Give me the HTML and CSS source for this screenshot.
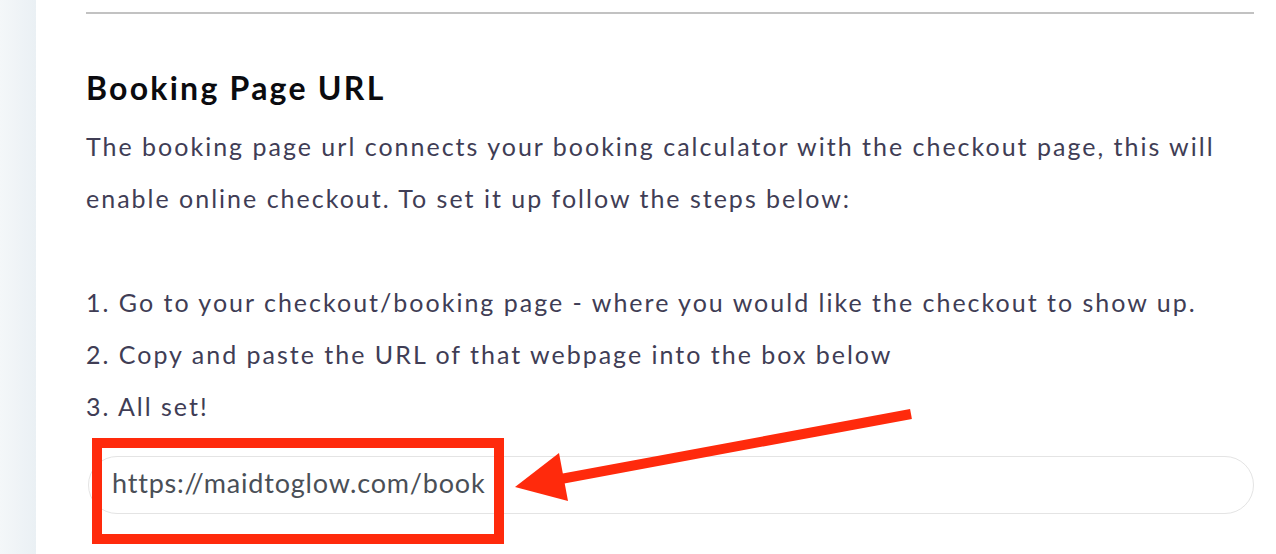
FILE: index.html
```html
<!DOCTYPE html>
<html lang="en">
<head>
<meta charset="utf-8">
<title>Booking Page URL</title>
<link rel="stylesheet" href="styles.css">
</head>
<body>
<div class="page">
  <aside class="sidebar"></aside>
  <main class="content">
    <hr class="divider">
    <section class="section">
      <h2 class="title">Booking Page URL</h2>
      <p class="desc">The booking page url connects your booking calculator with the checkout page, this will enable online checkout. To set it up follow the steps below:</p>
      <ol class="steps">
        <li>1. Go to your checkout/booking page - where you would like the checkout to show up.</li>
        <li>2. Copy and paste the URL of that webpage into the box below</li>
        <li>3. All set!</li>
      </ol>
      <div class="field">
        <input class="url-input" type="text" value="https://maidtoglow.com/book">
      </div>
    </section>
  </main>
  <svg class="annotation" width="1276" height="554" viewBox="0 0 1276 554">
    <rect x="97" y="443" width="402" height="96" fill="none" stroke="#ff2a0c" stroke-width="10"/>
    <line x1="911" y1="414" x2="550" y2="481" stroke="#ff2a0c" stroke-width="10"/>
    <polygon points="515,487 559,453 568,501" fill="#ff2a0c"/>
  </svg>
</div>
</body>
</html>
```
FILE: styles.css
```css
html, body {
  margin: 0;
  padding: 0;
  background: #ffffff;
}
.page {
  position: relative;
  display: flex;
  width: 1276px;
  height: 554px;
  overflow: hidden;
  font-family: "Lato", "Noto Sans", sans-serif;
}
.sidebar {
  width: 36px;
  flex: 0 0 36px;
  background: linear-gradient(90deg, #f4f7f9 0%, #eaf0f4 100%);
}
.content {
  flex: 1;
  padding: 12px 22px 0 50px;
}
.divider {
  margin: 0;
  border: 0;
  height: 2px;
  background: #c2c2c2;
}
.section {
  padding-top: 54px;
}
.title {
  margin: 0;
  font-size: 32px;
  font-weight: 700;
  letter-spacing: 2.25px;
  color: #0b0b0f;
  line-height: 40px;
}
.desc {
  margin: 12px 0 0;
  font-size: 25px;
  line-height: 52px;
  letter-spacing: 2px;
  color: #403d55;
}
.steps {
  list-style: none;
  margin: 52px 0 0;
  padding: 0;
  font-size: 25px;
  line-height: 52px;
  letter-spacing: 2px;
  color: #403d55;
}
.field {
  margin-top: 24px;
  padding-left: 2px;
}
.url-input {
  box-sizing: border-box;
  width: 100%;
  height: 58px;
  border: 1.5px solid #e4e4e4;
  border-radius: 29px;
  padding: 0 0 5px 23px;
  font-family: "Lato", "Noto Sans", sans-serif;
  font-size: 27px;
  letter-spacing: 0.8px;
  color: #4a4f57;
  background: #fff;
  outline: none;
}
.annotation {
  position: absolute;
  left: 0;
  top: 0;
  pointer-events: none;
}
```
